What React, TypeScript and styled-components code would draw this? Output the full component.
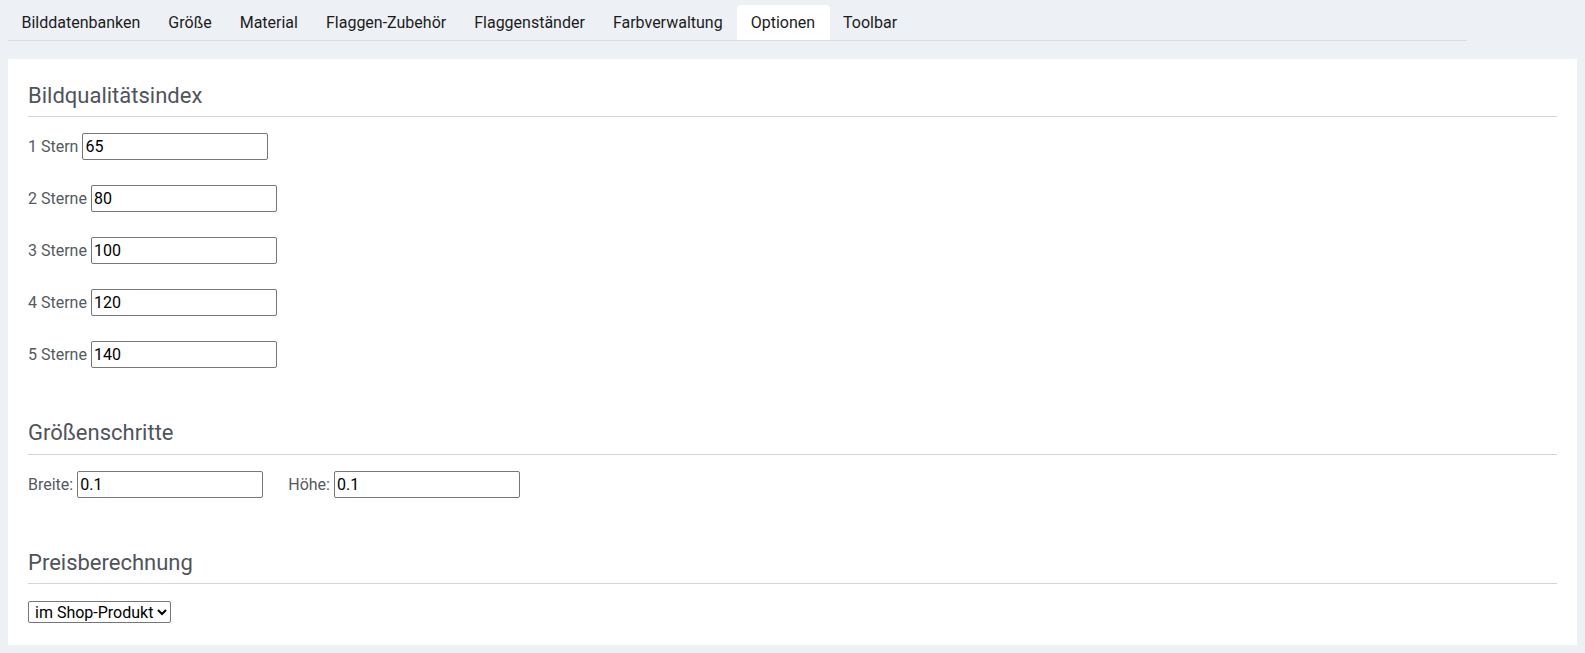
import React from "react";
import styled, { createGlobalStyle } from "styled-components";

const GlobalStyle = createGlobalStyle`
  html, body {
    margin: 0;
    background: #edf1f5;
  }
  body {
    padding: 5px 8px 8px;
    font-family: Roboto, "Liberation Sans", Arial, sans-serif;
  }
`;

const TabBar = styled.nav`
  display: flex;
  width: 93%;
  border-bottom: 1px solid #d9dde2;
  margin-bottom: 18px;
`;

const Tab = styled.div<{ $active?: boolean }>`
  display: flex;
  align-items: center;
  height: 35px;
  padding: 0 14.5px 0 13.5px;
  font-size: 16px;
  color: #1c1c1c;
  background: ${(p) => (p.$active ? "#ffffff" : "transparent")};
  border-radius: 4px 4px 0 0;
  cursor: pointer;
  white-space: nowrap;
`;

const Card = styled.main`
  background: #ffffff;
  padding: 24px 20px 22px;
`;

const Section = styled.section`
  & + & {
    margin-top: 52px;
  }
`;

const SectionTitle = styled.h3`
  margin: 0;
  font-size: 22px;
  font-weight: 400;
  line-height: 26.4px;
  padding-bottom: 7px;
  border-bottom: 1px solid #d5d5d5;
  color: #4f545a;
`;

const Fields = styled.div<{ $top?: number }>`
  display: flex;
  flex-direction: column;
  gap: 25px;
  margin-top: ${(p) => p.$top ?? 16}px;
`;

const Row = styled.div`
  display: flex;
  align-items: center;
`;

const Field = styled.label`
  display: inline-flex;
  align-items: center;
  & + & {
    margin-left: 25px;
  }
`;

const LabelText = styled.span`
  font-size: 16px;
  color: #555a60;
  margin-right: 4px;
`;

const NumberInput = styled.input`
  box-sizing: border-box;
  width: 186px;
  height: 27px;
  padding: 0 2px;
  border: 1px solid #767676;
  border-radius: 2px;
  font-family: inherit;
  font-size: 16px;
  color: #000;
  background: #fff;
  outline: none;
`;

const Select = styled.select`
  font-family: inherit;
  font-size: 16px;
  color: #000;
  height: 22px;
  border: 1px solid #767676;
  border-radius: 2px;
  background: #fff;
  padding: 0 0 0 2px;
`;

const tabs = [
  "Bilddatenbanken",
  "Größe",
  "Material",
  "Flaggen-Zubehör",
  "Flaggenständer",
  "Farbverwaltung",
  "Optionen",
  "Toolbar",
];

const stars = [
  { label: "1 Stern", value: "65" },
  { label: "2 Sterne", value: "80" },
  { label: "3 Sterne", value: "100" },
  { label: "4 Sterne", value: "120" },
  { label: "5 Sterne", value: "140" },
];

export default function App() {
  return (
    <>
      <GlobalStyle />
      <TabBar>
        {tabs.map((t) => (
          <Tab key={t} $active={t === "Optionen"}>
            {t}
          </Tab>
        ))}
      </TabBar>
      <Card>
        <Section>
          <SectionTitle>Bildqualitätsindex</SectionTitle>
          <Fields>
            {stars.map((s) => (
              <Row key={s.label}>
                <Field>
                  <LabelText>{s.label}</LabelText>
                  <NumberInput type="text" defaultValue={s.value} />
                </Field>
              </Row>
            ))}
          </Fields>
        </Section>
        <Section>
          <SectionTitle>Größenschritte</SectionTitle>
          <Fields>
            <Row>
              <Field>
                <LabelText>Breite:</LabelText>
                <NumberInput type="text" defaultValue="0.1" />
              </Field>
              <Field>
                <LabelText>Höhe:</LabelText>
                <NumberInput type="text" defaultValue="0.1" />
              </Field>
            </Row>
          </Fields>
        </Section>
        <Section>
          <SectionTitle>Preisberechnung</SectionTitle>
          <Fields $top={17}>
            <Row>
              <Select defaultValue="shop">
                <option value="shop">im Shop-Produkt</option>
                <option value="global">global</option>
              </Select>
            </Row>
          </Fields>
        </Section>
      </Card>
    </>
  );
}
